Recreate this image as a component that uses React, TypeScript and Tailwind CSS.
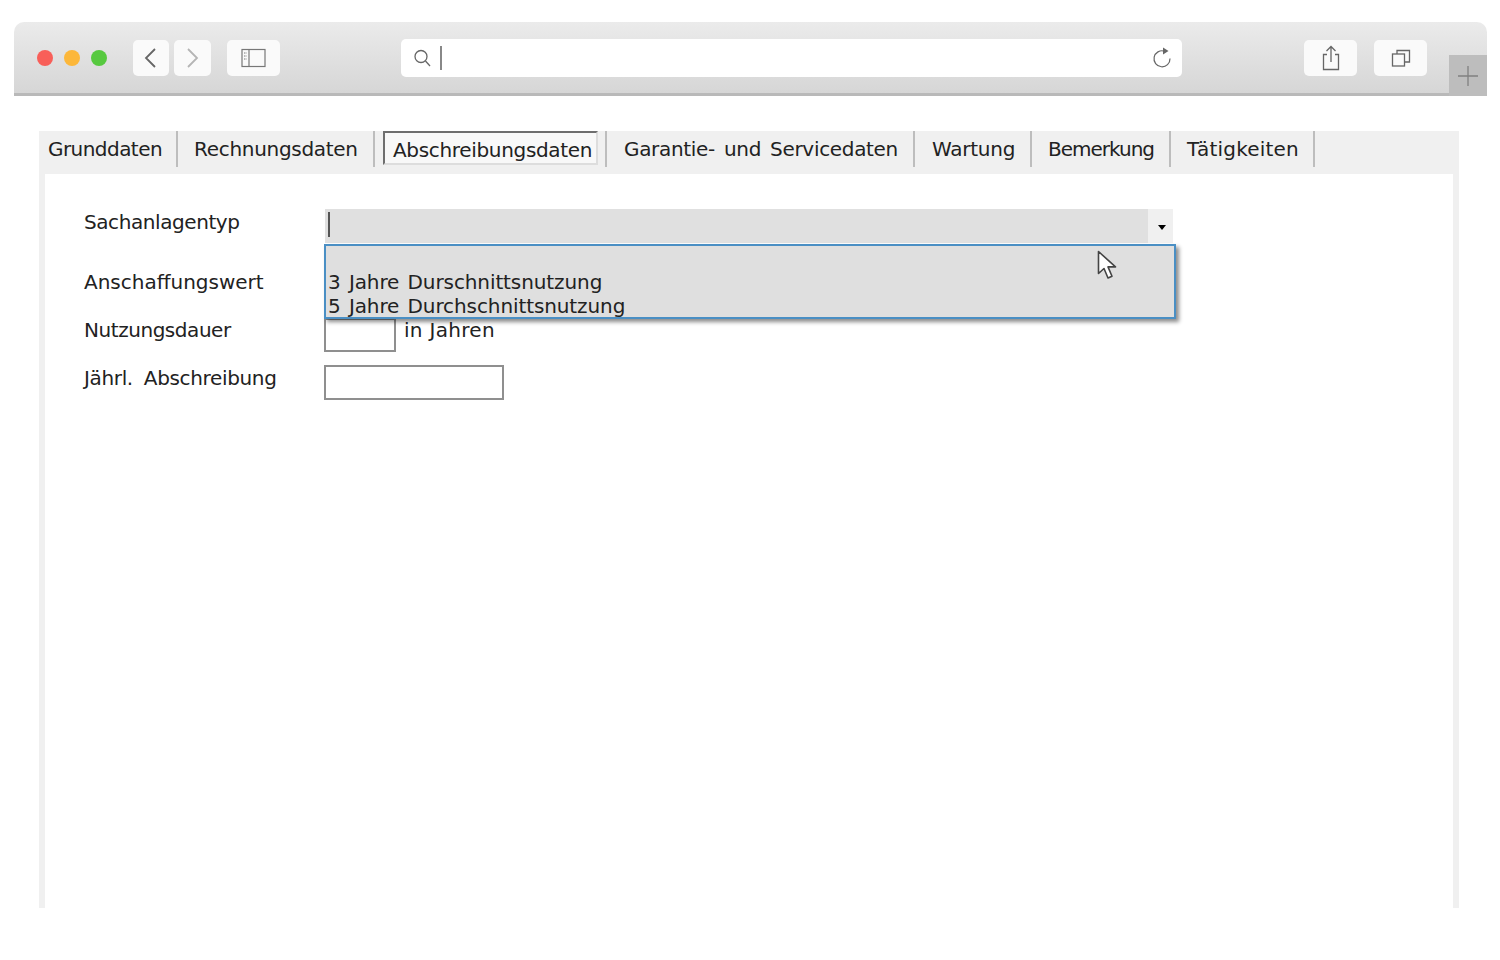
import React from 'react';

const tabs = [
  { label: 'Grunddaten', className: 'w-[139px] pl-[9px] tracking-[-0.55px]' },
  { label: 'Rechnungsdaten', className: 'w-[197px] pl-[16px] tracking-[-0.3px]' },
  { label: 'Abschreibungsdaten', className: '' },
  { label: 'Garantie- und Servicedaten', className: 'w-[308px] pl-[17px] tracking-[-0.32px] [word-spacing:3px]' },
  { label: 'Wartung', className: 'w-[117px] pl-[17px] tracking-[-0.25px]' },
  { label: 'Bemerkung', className: 'w-[139px] pl-[16px] tracking-[-1px]' },
  { label: 'Tätigkeiten', className: 'w-[144px] pl-[16px] tracking-[0.2px]' },
];

function ToolButton({ children, className }: { children: React.ReactNode; className: string }) {
  return (
    <div className={`h-[36px] rounded-[5px] bg-[#fafafa] flex items-center justify-center ${className}`}>
      {children}
    </div>
  );
}

function BrowserBar() {
  return (
    <div className="relative h-[74px] rounded-t-[10px] bg-gradient-to-b from-[#ebebeb] to-[#d6d6d6] border-b-[3px] border-[#b9b9b9] flex items-center">
      {/* traffic lights */}
      <div className="flex gap-[11px] ml-[23px] mr-[26px]">
        <div className="w-4 h-4 rounded-full bg-[#f85f59]" />
        <div className="w-4 h-4 rounded-full bg-[#fcb73a]" />
        <div className="w-4 h-4 rounded-full bg-[#57c93f]" />
      </div>
      <ToolButton className="w-[36px] mr-[5px] pr-[3px]">
        <svg width="14" height="22" viewBox="0 0 14 22" fill="none" stroke="#666" strokeWidth="1.8"><path d="M12 2 3 11l9 9" /></svg>
      </ToolButton>
      <ToolButton className="w-[37px] mr-[16px]">
        <svg width="14" height="22" viewBox="0 0 14 22" fill="none" stroke="#b5b5b5" strokeWidth="1.8"><path d="m2 2 9 9-9 9" /></svg>
      </ToolButton>
      <ToolButton className="w-[53px] mr-[121px]">
        <svg width="25" height="20" viewBox="0 0 25 20" fill="none" stroke="#777" strokeWidth="1.2">
          <rect x="1" y="1.5" width="23" height="17" />
          <path d="M8 1.5v17" />
          <path d="M3 5h3M3 8h3M3 11h3" strokeDasharray="1.5 1" />
        </svg>
      </ToolButton>
      <div className="w-[781px] h-[38px] rounded-[5px] bg-white flex items-center pl-[12px] pr-[10px]">
        <svg width="18" height="20" viewBox="0 0 18 20" fill="none" stroke="#666" strokeWidth="1.3">
          <circle cx="8" cy="8.5" r="6" />
          <path d="m12.5 13 4.5 5" />
        </svg>
        <div className="w-[2px] h-[24px] bg-[#888] ml-[9px]" />
        <svg className="ml-auto" width="20" height="23" viewBox="0 0 20 23" fill="none" stroke="#666" strokeWidth="1.2">
          <path d="M12.5 5.2A8 8 0 1 0 18 12.5" />
          <path d="M11 1.5 16.5 5 11 8.5z" fill="#666" stroke="none" />
        </svg>
      </div>
      <ToolButton className="w-[53px] ml-[122px] mr-[17px]">
        <svg width="20" height="26" viewBox="0 0 20 26" fill="none" stroke="#666" strokeWidth="1.3">
          <path d="M6 9.5H2.5V24.5h15V9.5H14" />
          <path d="M10 17V2M5.5 6 10 1.5 14.5 6" />
        </svg>
      </ToolButton>
      <ToolButton className="w-[53px]">
        <svg width="20" height="18" viewBox="0 0 20 18" fill="none" stroke="#666" strokeWidth="1.3">
          <rect x="1.5" y="5" width="12" height="12" />
          <path d="M6 5V1.5h12.5V13H13.5" />
        </svg>
      </ToolButton>
      {/* new tab */}
      <div className="absolute right-0 top-[33px] w-[38px] h-[41px] bg-[#bdbdbd] flex items-center justify-center">
        <svg width="20" height="20" viewBox="0 0 20 20" fill="none" stroke="#808080" strokeWidth="1.3"><path d="M10 0v20M0 10h20" /></svg>
      </div>
    </div>
  );
}

function TabStrip() {
  return (
    <div className="h-[43px] flex items-start text-[20px] leading-[36px] text-[#222]">
      {tabs.map((tab, i) =>
        i === 2 ? (
          <div key={tab.label} className="w-[232px] h-[36px] pl-[8px] border-r-2 border-[#bdbdbd]">
            <div className="w-[215px] h-[34px] pl-[8px] bg-[#f8f8f8] border-2 border-[#6e6e6e] border-r-[#ddd] border-b-[#ddd] leading-[35px] tracking-[-0.33px] whitespace-nowrap">
              {tab.label}
            </div>
          </div>
        ) : (
          <div key={tab.label} className={`h-[36px] border-r-2 border-[#bdbdbd] whitespace-nowrap ${tab.className}`}>
            {tab.label}
          </div>
        ),
      )}
    </div>
  );
}

function Label({ children, className }: { children: React.ReactNode; className: string }) {
  return <div className={`w-[240px] shrink-0 ${className}`}>{children}</div>;
}

function FormPanel() {
  return (
    <div className="relative mx-[6px] h-[734px] bg-white pt-[35px] pl-[39px] text-[20px] text-[#222]">
      <div className="flex h-[34px]">
        <Label className="leading-[26px] tracking-[-0.42px]">Sachanlagentyp</Label>
        <div className="w-[848px] ml-[1px] h-[34px] bg-[#f0f0f0] flex">
          <div className="w-[823px] h-full bg-[#e0e0e0] pl-[3px] pt-[3px]">
            <div className="w-[2px] h-[25px] bg-[#555]" />
          </div>
          <div className="flex-1 flex items-center justify-center pt-[2px] pl-[3px]">
            <div className="w-0 h-0 border-x-[4px] border-x-transparent border-t-[5px] border-t-black" />
          </div>
        </div>
      </div>
      <div className="flex h-[35px] mt-[27px]">
        <Label className="leading-[24px]">Anschaffungswert</Label>
        <div className="w-[180px] h-[35px] border-2 border-[#8f8f8f]" />
      </div>
      <div className="flex h-[34px] mt-[13px]">
        <Label className="leading-[24px] tracking-[-0.45px]">Nutzungsdauer</Label>
        <div className="w-[72px] h-[34px] border-2 border-[#8f8f8f]" />
        <div className="ml-[8px] leading-[24px] tracking-[0.3px]">in Jahren</div>
      </div>
      <div className="flex h-[35px] mt-[13px]">
        <Label className="leading-[26px] tracking-[-0.35px] [word-spacing:5px]">Jährl. Abschreibung</Label>
        <div className="w-[180px] h-[35px] border-2 border-[#8f8f8f]" />
      </div>

      {/* open dropdown list */}
      <div className="absolute left-[279px] top-[70px] w-[852px] h-[75px] bg-[#dfdfdf] border-2 border-[#4a8fc4] shadow-[3px_3px_4px_rgba(0,0,0,0.45)] pl-[2px] pt-[24px] leading-[24px] tracking-[-0.1px] [word-spacing:2px]">
        <div>3 Jahre Durschnittsnutzung</div>
        <div>5 Jahre Durchschnittsnutzung</div>
      </div>

      {/* mouse pointer */}
      <svg className="absolute left-[1052px] top-[76px]" width="20" height="30" viewBox="0 0 20 30">
        <path d="M1.5 1.5v22l5.5-5 4 9.5 4-1.8-4-9.3h7.5z" fill="#fff" stroke="#444" strokeWidth="1.6" strokeLinejoin="round" />
      </svg>
    </div>
  );
}

export default function App() {
  return (
    <div className="w-[1500px] h-[960px] bg-white pt-[22px] px-[14px] font-['DejaVu_Sans',sans-serif] overflow-hidden">
      <div className="w-[1473px]">
        <BrowserBar />
      </div>
      <div className="w-[1420px] ml-[25px] mt-[35px] bg-[#f0f0f0]">
        <TabStrip />
        <FormPanel />
      </div>
    </div>
  );
}
